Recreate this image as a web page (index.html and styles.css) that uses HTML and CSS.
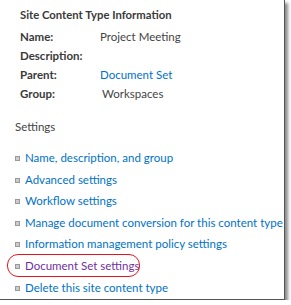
FILE: index.html
```html
<!DOCTYPE html>
<html>
	<head>
		<link rel="stylesheet" href="styles.css">
	</head>
	<body>
		<div class="frame">
			<h3 class="title">Site Content Type Information</h3>
			<table class="info">
				<tr>
					<td class="label">Name:</td>
					<td class="value">Project Meeting</td>
				</tr>
				<tr>
					<td class="label">Description:</td>
					<td class="value"></td>
				</tr>
				<tr>
					<td class="label">Parent:</td>
					<td class="value"><a href="#">Document Set</a></td>
				</tr>
				<tr>
					<td class="label">Group:</td>
					<td class="value group">Workspaces</td>
				</tr>
			</table>

			<div class="section">Settings</div>
			<ul class="settings">
				<li><a href="#">Name, description, and group</a></li>
				<li><a href="#">Advanced settings</a></li>
				<li><a href="#">Workflow settings</a></li>
				<li><a href="#">Manage document conversion for this content type</a></li>
				<li><a href="#">Information management policy settings</a></li>
				<li class="marked"><a href="#" class="visited">Document Set settings</a></li>
				<li><a href="#">Delete this site content type</a></li>
			</ul>
		</div>
	</body>
</html>
```

FILE: styles.css
```css
body {
	margin: 0;
	background: #fff;
	font-family: Lato, "Open Sans", sans-serif;
	font-size: 11.5px;
	color: #444;
}

.frame {
	width: 285px;
	height: 300px;
	border-right: 1px solid #555;
	border-bottom: 1px solid #555;
	box-shadow: 3px 3px 3px rgba(0, 0, 0, 0.45);
	box-sizing: border-box;
	padding: 6px 0 0 20px;
	overflow: hidden;
}

.title {
	margin: 0 0 3px 0;
	font-size: 11.3px;
	font-weight: bold;
	color: #3a3a3a;
	line-height: 18px;
}

.info {
	border-collapse: collapse;
}

.info td {
	padding: 0;
	height: 19px;
	vertical-align: middle;
}

.label {
	width: 80px;
	font-weight: bold;
	color: #3a3a3a;
}

.group {
	padding-left: 2px !important;
}

a {
	color: #0072c6;
	text-decoration: none;
}

a.visited {
	color: #7030a0;
}

.section {
	margin: 15px 0 0 -5px;
	line-height: 18px;
}

.settings {
	list-style: none;
	margin: 11px 0 0 -5px;
	padding: 0;
}

.settings li {
	line-height: 21.6px;
	padding-left: 10px;
	position: relative;
	white-space: nowrap;
}

.settings li::before {
	content: "";
	position: absolute;
	left: 0;
	top: 9px;
	width: 3px;
	height: 3px;
	border: 1px solid #999;
	background: #ccc;
}

.marked::after {
	content: "";
	position: absolute;
	left: -8px;
	top: -1px;
	width: 131px;
	height: 21px;
	border: 1px solid #e8141c;
	border-radius: 11px;
}
```
